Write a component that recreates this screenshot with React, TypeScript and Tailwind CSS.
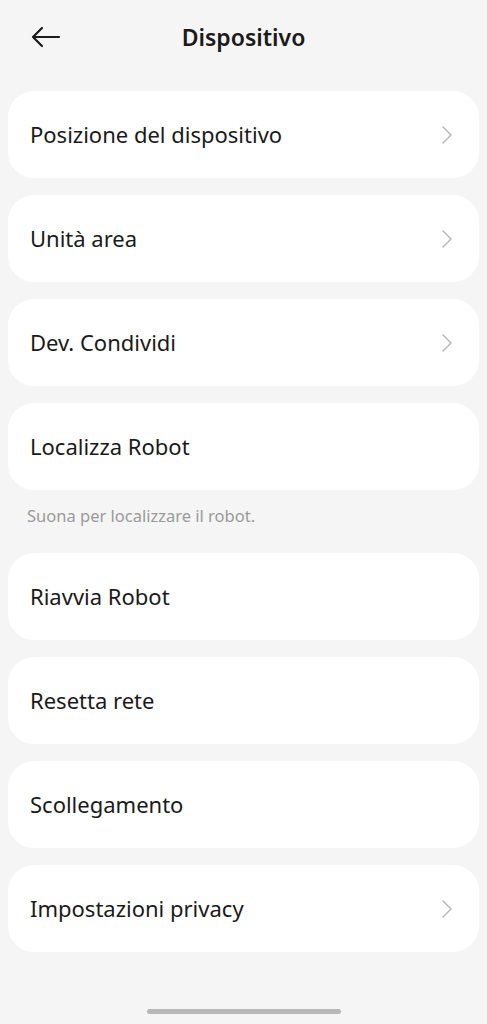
const rows = [
  { label: "Posizione del dispositivo", arrow: true },
  { label: "Unità area", arrow: true },
  { label: "Dev. Condividi", arrow: true },
  { label: "Localizza Robot", arrow: false, note: "Suona per localizzare il robot." },
  { label: "Riavvia Robot", arrow: false },
  { label: "Resetta rete", arrow: false },
  { label: "Scollegamento", arrow: false },
  { label: "Impostazioni privacy", arrow: true },
];

const App = () => {
  return (
    <div
      className="min-h-[1024px] w-[487px] bg-[#f5f5f5] text-[#1a1a1a] flex flex-col"
      style={{ fontFamily: '"Noto Sans", "Open Sans", sans-serif' }}
    >
      {/* header */}
      <div className="relative flex h-[74px] items-center justify-center">
        <svg className="absolute left-[31px] top-[26px]" width="30" height="22" viewBox="0 0 30 22" fill="none">
          <path d="M28 11H3M11 2L2 11l9 9" stroke="#1a1a1a" strokeWidth="2.2" strokeLinecap="round" strokeLinejoin="round" />
        </svg>
        <h1 className="text-[23px] font-semibold">Dispositivo</h1>
      </div>

      <div className="mt-[17px] flex flex-col gap-[17px] px-2">
        {rows.map((r) => (
          <div key={r.label}>
            <div className="flex h-[87px] items-center justify-between rounded-[26px] bg-white pl-[22px] pr-[26px]">
              <span className="text-[22px]">{r.label}</span>
              {r.arrow && (
                <svg width="12" height="20" viewBox="0 0 12 20" fill="none">
                  <path d="M2 2l8 8-8 8" stroke="#b5b5b5" strokeWidth="1.4" strokeLinecap="round" strokeLinejoin="round" />
                </svg>
              )}
            </div>
            {r.note && (
              <p className="mt-[13px] mb-[8px] pl-[19px] text-[16.5px] leading-[25px] text-[#9a9a9a]">{r.note}</p>
            )}
          </div>
        ))}
      </div>

      <div className="mt-auto mb-[10px] flex justify-center">
        <div className="h-[5px] w-[194px] rounded-full bg-[#b8b8b8]" />
      </div>
    </div>
  );
};

export default App;
